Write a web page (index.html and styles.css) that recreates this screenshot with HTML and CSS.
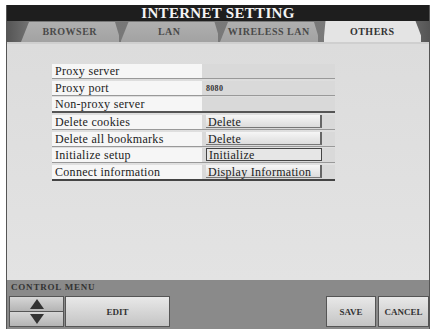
FILE: index.html
```html
<!DOCTYPE html>
<html lang="en">
<head>
    <meta charset="UTF-8">
    <title>Internet Setting</title>
    <link rel="stylesheet" href="styles.css">
</head>
<body>
    <div class="screen">
        <div class="title-bar">INTERNET SETTING</div>
        <div class="tabs">
            <div class="tab">BROWSER</div>
            <div class="tab">LAN</div>
            <div class="tab">WIRELESS LAN</div>
            <div class="tab active">OTHERS</div>
        </div>
        <div class="content">
            <div class="settings">
                <div class="row">
                    <span class="label">Proxy server</span>
                    <span class="value"></span>
                </div>
                <div class="row">
                    <span class="label">Proxy port</span>
                    <span class="value">8080</span>
                </div>
                <div class="row">
                    <span class="label">Non-proxy server</span>
                    <span class="value"></span>
                </div>
                <div class="row">
                    <span class="label">Delete cookies</span>
                    <span class="value"><span class="btn">Delete</span></span>
                </div>
                <div class="row">
                    <span class="label">Delete all bookmarks</span>
                    <span class="value"><span class="btn">Delete</span></span>
                </div>
                <div class="row">
                    <span class="label">Initialize setup</span>
                    <span class="value"><span class="btn pressed">Initialize</span></span>
                </div>
                <div class="row">
                    <span class="label">Connect information</span>
                    <span class="value"><span class="btn">Display Information</span></span>
                </div>
            </div>
        </div>
        <div class="control">
            <div class="control-label">CONTROL MENU</div>
            <div class="control-buttons">
                <div class="updown">
                    <div class="arrow">
                        <svg width="14" height="10" viewBox="0 0 14 10"><polygon points="7,0 14,10 0,10" fill="#333"/></svg>
                    </div>
                    <div class="arrow">
                        <svg width="14" height="10" viewBox="0 0 14 10"><polygon points="0,0 14,0 7,10" fill="#333"/></svg>
                    </div>
                </div>
                <div class="cbtn edit">EDIT</div>
                <div class="spacer"></div>
                <div class="cbtn save">SAVE</div>
                <div class="cbtn cancel">CANCEL</div>
            </div>
        </div>
    </div>
</body>
</html>
```

FILE: styles.css
```css
body {
    margin: 0;
    background: #fff;
    font-family: "Liberation Serif", "DejaVu Serif", serif;
}
.screen {
    width: 422px;
    height: 324px;
    margin: 5px 0 0 6px;
    background: #8a8a8a;
    border-left: 1px solid #555;
    border-right: 1px solid #555;
    display: flex;
    flex-direction: column;
}
.title-bar {
    height: 16px;
    background: #1e1e1e;
    color: #f4f4f4;
    text-align: center;
    font-weight: bold;
    font-size: 15px;
    line-height: 17px;
    letter-spacing: 0.3px;
}
.tabs {
    height: 21px;
    background: linear-gradient(to right, #555, #777 6%, #7a7a7a 92%, #555);
    display: flex;
    padding: 0 8px 0 14px;
    gap: 2px;
}
.tab {
    width: 100px;
    background: linear-gradient(#b0b0b0, #a2a2a2);
    clip-path: polygon(8px 1px, 94px 1px, 100px 100%, 0 100%);
    text-align: center;
    color: #4a4a4a;
    font-size: 10px;
    font-weight: bold;
    line-height: 22px;
    letter-spacing: 0.5px;
}
.tab.active {
    background: #e4e4e4;
    color: #333;
    clip-path: polygon(2px 0, 92px 0, 100px 100%, 0 100%);
    margin-left: 4px;
}
.content {
    height: 238px;
    background: linear-gradient(#dcdcdc, #e3e3e3);
    border-top: 2px solid #cfcfcf;
    padding: 20px 0 0 45px;
    box-sizing: border-box;
}
.settings {
    width: 283px;
}
.row {
    display: flex;
    height: 14px;
    margin-bottom: 1.7px;
    border-bottom: 1px solid #999;
    font-size: 12px;
    letter-spacing: 0.3px;
    line-height: 15px;
    color: #222;
}
.row:nth-child(3) {
    border-bottom: 2px solid #555;
}
.row:last-child {
    border-bottom: 2px solid #444;
}
.label {
    width: 150px;
    background: #f6f6f6;
    padding-left: 3px;
    box-sizing: border-box;
}
.value {
    flex: 1;
    background: #d9d9d9;
    padding-left: 4px;
    font-size: 8px;
    font-weight: bold;
    color: #333;
}
.btn {
    display: inline-block;
    width: 116px;
    height: 13px;
    background: linear-gradient(#f6f6f6, #dcdcdc);
    border-right: 2px solid #666;
    border-bottom: 1px solid #777;
    font-size: 12px;
    font-weight: normal;
    color: #222;
    line-height: 14px;
    padding-left: 2px;
    box-sizing: border-box;
    vertical-align: top;
}
.btn.pressed {
    border: 1px solid #444;
    background: #e6e6e6;
    line-height: 12px;
}
.control {
    flex: 1;
    display: flex;
    flex-direction: column;
    padding-top: 2px;
}
.control-label {
    font-size: 9px;
    font-weight: bold;
    color: #333;
    height: 11px;
    line-height: 11px;
    padding-left: 4px;
    letter-spacing: 0.8px;
}
.control-buttons {
    display: flex;
    margin-top: 3px;
    height: 31px;
    padding-left: 2px;
}
.updown {
    width: 53px;
    display: flex;
    flex-direction: column;
    border: 1px solid #555;
}
.arrow {
    flex: 1;
    background: linear-gradient(#d6d6d6, #b4b4b4);
    display: flex;
    align-items: center;
    justify-content: center;
    border-bottom: 1px solid #555;
}
.arrow:last-child {
    border-bottom: none;
}
.cbtn {
    background: linear-gradient(#e8e8e8, #c4c4c4);
    border: 1px solid #555;
    font-size: 9px;
    font-weight: bold;
    color: #333;
    display: flex;
    align-items: center;
    justify-content: center;
    box-sizing: border-box;
}
.edit {
    width: 105px;
    margin-left: 1px;
}
.spacer {
    flex: 1;
}
.save {
    width: 50px;
}
.cancel {
    width: 51px;
    margin-left: 2px;
}
```
